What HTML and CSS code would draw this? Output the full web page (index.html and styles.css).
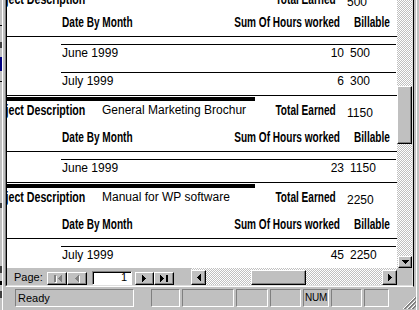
FILE: index.html
```html
<!DOCTYPE html>
<html lang="en">
  <head>
    <meta charset="UTF-8" />
    <title>Project Hours Report - Print Preview</title>
    <link rel="stylesheet" href="styles.css">
  </head>
  <body>
    <div id="desk">
      <!-- edge of the database window behind the preview -->
      <div class="behind">
        <div class="mk mk1"></div>
        <div class="mk mk2"></div>
        <div class="mk mk3"></div>
        <div class="mk mk4"></div>
        <div class="mk mk5"></div>
        <div class="mk mk6"></div>
        <div class="mk mk7"></div>
        <div class="mk mk8"></div>
      </div>

      <div class="frame">
        <div class="child">
          <div class="client">
            <div class="view">
              <div class="report">
                <!-- previous project, header scrolled off the top -->
                <div class="ghead first">
                  <div class="lbl r proj"><span>Project Description</span></div>
                  <div class="val desc"></div>
                  <div class="lbl r earned"><span>Total Earned</span></div>
                  <div class="val total">500</div>
                </div>
                <div class="cols">
                  <div class="lbl c-date"><span>Date By Month</span></div>
                  <div class="lbl r c-hours"><span>Sum Of Hours worked</span></div>
                  <div class="lbl c-bill"><span>Billable</span></div>
                </div>
                <div class="dgap"></div>
                <div class="row tall">
                  <div>June 1999</div>
                  <div class="num">10</div>
                  <div class="bill">500</div>
                </div>
                <div class="row">
                  <div>July 1999</div>
                  <div class="num">6</div>
                  <div class="bill">300</div>
                </div>

                <!-- General Marketing Brochure -->
                <div class="gline"></div>
                <div class="gbar"></div>
                <div class="ghead">
                  <div class="lbl r proj"><span>Project Description</span></div>
                  <div class="val desc">General Marketing Brochur</div>
                  <div class="lbl r earned"><span>Total Earned</span></div>
                  <div class="val total">1150</div>
                </div>
                <div class="cols">
                  <div class="lbl c-date"><span>Date By Month</span></div>
                  <div class="lbl r c-hours"><span>Sum Of Hours worked</span></div>
                  <div class="lbl c-bill"><span>Billable</span></div>
                </div>
                <div class="dgap"></div>
                <div class="row">
                  <div>June 1999</div>
                  <div class="num">23</div>
                  <div class="bill">1150</div>
                </div>

                <!-- Manual for WP software -->
                <div class="gline"></div>
                <div class="gbar"></div>
                <div class="ghead">
                  <div class="lbl r proj"><span>Project Description</span></div>
                  <div class="val desc">Manual for WP software</div>
                  <div class="lbl r earned"><span>Total Earned</span></div>
                  <div class="val total">2250</div>
                </div>
                <div class="cols">
                  <div class="lbl c-date"><span>Date By Month</span></div>
                  <div class="lbl r c-hours"><span>Sum Of Hours worked</span></div>
                  <div class="lbl c-bill"><span>Billable</span></div>
                </div>
                <div class="dgap"></div>
                <div class="row">
                  <div>July 1999</div>
                  <div class="num">45</div>
                  <div class="bill">2250</div>
                </div>
              </div>

              <div class="vscroll">
                <div class="btn thumb"></div>
                <div class="btn down">
                  <svg width="7" height="4" viewBox="0 0 7 4"><path d="M0 0h7v1H0zM1 1h5v1H1zM2 2h3v1H2zM3 3h1v1H3z" fill="#000"/></svg>
                </div>
              </div>
            </div>

            <div class="navbar">
              <div class="pagelabel">Page:</div>
              <div class="btn navbtn">
                <svg width="9" height="9" viewBox="0 0 9 9">
                  <path d="M2 2h2v7H2zM6 5h1v1H6zM7 4h1v3H7zM8 3h1v5H8z" fill="#fff"/>
                  <path d="M1 1h2v7H1zM5 4h1v1H5zM6 3h1v3H6zM7 2h1v5H7zM8 1h1v7H8z" fill="#808080"/>
                </svg>
              </div>
              <div class="btn navbtn">
                <svg width="6" height="9" viewBox="0 0 6 9">
                  <path d="M2 5h1v1H2zM3 4h1v3H3zM4 3h1v5H4zM5 2h1v7H5z" fill="#fff"/>
                  <path d="M1 4h1v1H1zM2 3h1v3H2zM3 2h1v5H3zM4 1h1v7H4z" fill="#808080"/>
                </svg>
              </div>
              <div class="pagebox">1</div>
              <div class="btn navbtn next">
                <svg width="5" height="9" viewBox="0 0 5 9"><path d="M0 1h1v7H0zM1 2h1v5H1zM2 3h1v3H2zM3 4h1v1H3z" fill="#000"/></svg>
              </div>
              <div class="btn navbtn last">
                <svg width="9" height="9" viewBox="0 0 9 9"><path d="M0 1h1v7H0zM1 2h1v5H1zM2 3h1v3H2zM3 4h1v1H3zM6 1h2v7H6z" fill="#000"/></svg>
              </div>

              <div class="hscroll">
                <div class="btn arrow">
                  <svg width="4" height="7" viewBox="0 0 4 7"><path d="M0 3h1v1H0zM1 2h1v3H1zM2 1h1v5H2zM3 0h1v7H3z" fill="#000"/></svg>
                </div>
                <div class="btn hthumb"></div>
                <div class="btn arrow right">
                  <svg width="4" height="7" viewBox="0 0 4 7"><path d="M0 0h1v7H0zM1 1h1v5H1zM2 2h1v3H2zM3 3h1v1H3z" fill="#000"/></svg>
                </div>
              </div>
              <div class="corner"></div>
            </div>
          </div>
        </div>

        <div class="statusbar">
          <div class="panel ready">Ready</div>
          <div class="panel p1"></div>
          <div class="panel p2"></div>
          <div class="panel p3"></div>
          <div class="panel p4"></div>
          <div class="panel p5">NUM</div>
          <div class="panel p6"></div>
          <div class="panel p7"></div>
          <svg class="grip" width="15" height="14" viewBox="0 0 15 14">
            <path d="M13 1L1 13M13 5L5 13M13 9L9 13" stroke="#fff" stroke-width="1"/>
            <path d="M14 1L2 13M14 2L3 13M14 5L6 13M14 6L7 13M14 9L10 13M14 10L11 13" stroke="#808080" stroke-width="1"/>
          </svg>
        </div>
      </div>
    </div>
  </body>
</html>
```

FILE: styles.css
```css
* {
  box-sizing: border-box;
}

body {
  margin: 0;
  font-family: "Liberation Sans", Arial, sans-serif;
  font-size: 11px;
  color: #000;
  background: #c0c0c0;
}

#desk {
  display: flex;
  width: 419px;
  height: 310px;
  overflow: hidden;
  background: #c0c0c0;
}

/* window behind */
.behind {
  display: flex;
  flex-direction: column;
  flex: none;
  width: 2px;
}

.mk {
  flex: none;
  width: 2px;
  background: #000;
}

.mk1 { margin-top: 25px; height: 1px; }
.mk2 { margin-top: 16px; height: 6px; background: #404040; }
.mk3 { margin-top: 9px; height: 14px; background: #000080; }
.mk4 { margin-top: 10px; height: 1px; }
.mk5 { margin-top: 121px; height: 5px; background: #404040; }
.mk6 { margin-top: 58px; height: 7px; background: #404040; }
.mk7 { margin-top: 8px; height: 4px; }
.mk8 { margin-top: 6px; height: 7px; background: #404040; }

/* preview window */
.frame {
  display: flex;
  flex-direction: column;
  flex: none;
  width: 415px;
  height: 310px;
  padding: 0 2px;
  border-left: 1px solid #fff;
  border-right: 1px solid #fff;
}

.child {
  border-left: 1px solid #808080;
  border-right: 1px solid #000;
  border-bottom: 1px solid #fff;
}

.client {
  border-left: 1px solid #000;
  border-right: 1px solid #dfdfdf;
  border-bottom: 1px solid #dfdfdf;
}

.view {
  display: flex;
  height: 268px;
}

.report {
  flex: none;
  width: 390px;
  height: 268px;
  overflow: hidden;
  background: #fff;
}

.btn {
  display: flex;
  align-items: center;
  justify-content: center;
  background: #c0c0c0;
  border: 1px solid;
  border-color: #fff #000 #000 #fff;
  box-shadow: inset -1px -1px #808080;
}

.vscroll {
  display: flex;
  flex-direction: column;
  width: 15px;
  background: repeating-conic-gradient(#fff 0 25%, #c0c0c0 0 50%) 0 0 / 2px 2px;
}

.thumb {
  margin-top: 86px;
  height: 58px;
}

.down {
  margin-top: auto;
  margin-left: 1px;
  width: 14px;
  height: 12px;
}

/* report sections */
.lbl {
  font-weight: bold;
  font-size: 14px;
  line-height: 16px;
  white-space: nowrap;
}

/* condensed heading face */
.lbl span {
  display: inline-block;
  transform: scaleX(0.72);
  transform-origin: left center;
}

.lbl.r span {
  transform-origin: right center;
}

.proj.lbl span {
  transform: scaleX(0.76);
}

.val,
.row {
  font-size: 12px;
  line-height: 14px;
  white-space: nowrap;
}

.ghead {
  display: flex;
  align-items: flex-start;
  height: 28px;
  padding-top: 1px;
}

.ghead.first {
  margin-top: -10px;
  height: 24px;
}

.proj {
  display: flex;
  justify-content: flex-end;
  flex: none;
  width: 120px;
  margin-left: -42px;
}

.desc {
  flex: none;
  width: 153px;
  margin-left: 17px;
  padding-top: 1px;
  overflow: hidden;
}

.earned {
  display: flex;
  justify-content: flex-end;
  flex: none;
  width: 63px;
  margin-left: 18px;
}

.total {
  margin-left: 11px;
  padding-top: 4px;
}

.cols {
  display: flex;
  height: 23px;
  border-bottom: 1px solid #000;
}

.c-date {
  flex: none;
  width: 150px;
  margin-left: 55px;
}

.c-hours {
  display: flex;
  justify-content: flex-end;
  flex: none;
  width: 128px;
}

.c-bill {
  margin-left: 14px;
}

.dgap {
  height: 7px;
}

.row {
  display: grid;
  grid-template-columns: 150px 132px 1fr;
  height: 23px;
  margin: 0 1px 0 54px;
  padding: 1px 0 0 1px;
  border-top: 1px solid #000;
}

.row.tall {
  height: 28px;
}

.num {
  text-align: right;
}

.bill {
  padding-left: 6px;
}

.gline {
  height: 1px;
  margin-bottom: 1px;
  background: #000;
}

.gbar {
  width: 248px;
  height: 4px;
  background: #000;
}

/* record navigation + horizontal scroll */
.navbar {
  display: flex;
  align-items: flex-start;
  height: 17px;
}

.pagelabel {
  flex: none;
  width: 40px;
  padding: 3px 0 0 7px;
  line-height: 13px;
}

.navbtn {
  flex: none;
  width: 20px;
  height: 13px;
  margin-top: 4px;
}

.pagebox {
  flex: none;
  width: 40px;
  height: 14px;
  margin: 3px 0 0 5px;
  padding-right: 4px;
  text-align: right;
  line-height: 11px;
  background: #fff;
  border: 1px solid;
  border-color: #808080 #fff #fff #808080;
  box-shadow: inset 1px 1px #000;
}

.next {
  width: 19px;
  margin-left: 3px;
}

.hscroll {
  display: flex;
  align-items: flex-end;
  flex: none;
  width: 206px;
  height: 17px;
  margin-left: 17px;
  background: repeating-conic-gradient(#fff 0 25%, #c0c0c0 0 50%) 0 0 / 2px 2px;
}

.arrow {
  flex: none;
  width: 15px;
  height: 15px;
}

.arrow.right {
  margin-left: auto;
}

.hthumb {
  flex: none;
  width: 55px;
  height: 15px;
  margin-left: 45px;
}

.corner {
  flex: none;
  width: 15px;
  height: 17px;
  background: #c0c0c0;
}

/* status bar */
.statusbar {
  display: flex;
  gap: 2px;
  height: 23px;
  padding: 2px 0 0 10px;
}

.panel {
  flex: none;
  height: 18px;
  border: 1px solid;
  border-color: #808080 #fff #fff #808080;
  line-height: 16px;
}

.ready { width: 119px; padding-left: 2px; }
.p1 { width: 29px; margin-left: 15px; }
.p2 { width: 52px; }
.p3 { width: 32px; }
.p4 { width: 31px; }
.p5 { width: 26px; font-size: 10px; letter-spacing: -0.3px; text-align: center; }
.p6 { width: 31px; }
.p7 { width: 25px; }

.grip {
  flex: none;
  align-self: flex-end;
  margin: 0 -3px 0 auto;
}
```
